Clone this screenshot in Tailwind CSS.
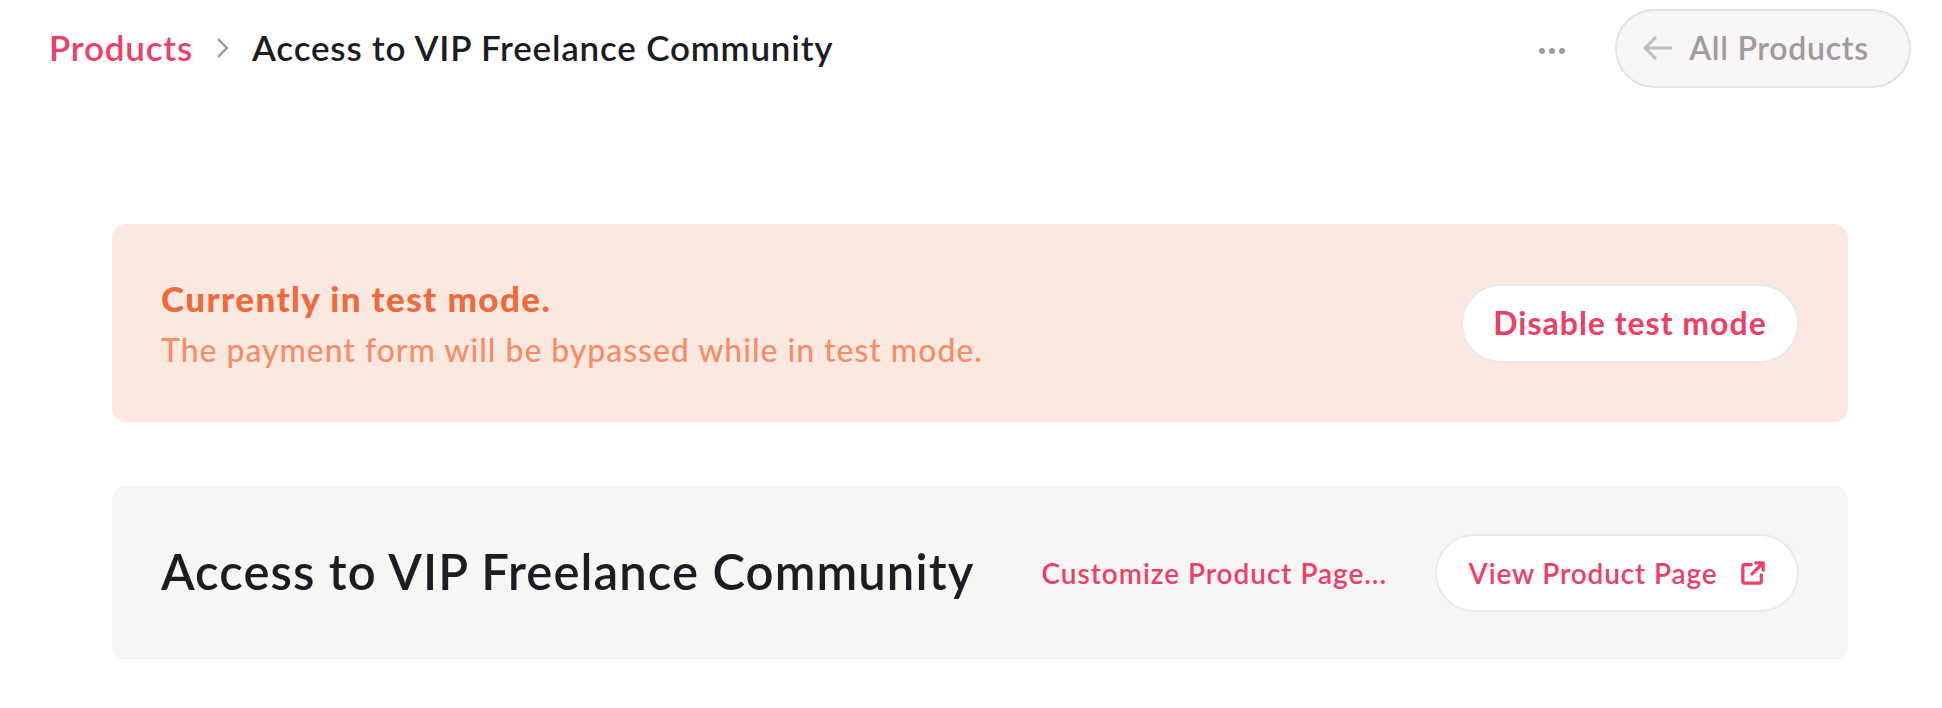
<!DOCTYPE html>
<html lang="en">
<head>
  <meta charset="UTF-8">
  <title>Access to VIP Freelance Community</title>
  <script src="https://cdn.jsdelivr.net/npm/@tailwindcss/browser@4"></script>
</head>
<body class="bg-white font-['Lato',sans-serif]">
  <!-- Top bar -->
  <header class="h-[96px] pl-[49px] pr-[31px] flex items-center justify-between">
    <nav class="flex items-center text-[35px] font-semibold tracking-[0.8px] -mt-[2px]">
      <a class="text-[#ec4067]">Products</a>
      <svg class="ml-[23px] mr-[22px] mt-[2px]" width="14" height="22" viewBox="0 0 14 22" fill="none" stroke="#a0a0aa" stroke-width="2.5"><path d="M2 2l9 9-9 9"/></svg>
      <span class="text-[#1c1c24]">Access to VIP Freelance Community</span>
    </nav>
    <div class="flex items-center">
      <div class="flex gap-[4px] mr-[50px] mt-[6px]">
        <span class="w-[6px] h-[6px] rounded-full bg-[#9d9aa3]"></span>
        <span class="w-[6px] h-[6px] rounded-full bg-[#9d9aa3]"></span>
        <span class="w-[6px] h-[6px] rounded-full bg-[#9d9aa3]"></span>
      </div>
      <button class="w-[296px] h-[79px] pr-[14px] rounded-full border-2 border-[#e6e1e1] bg-[#f7f5f6] flex items-center justify-center gap-[16px] text-[32px] font-semibold tracking-[0.7px] text-[#a09a9a]">
        <svg width="30" height="26" viewBox="0 0 30 26" fill="none" stroke="#c2bdbd" stroke-width="3"><path d="M29 13H2M13 2L2 13l11 11"/></svg>
        All Products
      </button>
    </div>
  </header>

  <main class="pl-[112px] pr-[94px] pt-[128px] flex flex-col gap-[64px]">
    <!-- Test mode notice -->
    <section class="h-[198px] rounded-[14px] bg-[#fae8e1] px-[49px] flex items-center justify-between">
      <div class="pt-[2px]">
        <p class="text-[35px] font-black tracking-[1.4px] text-[#ee6a3b] leading-[46px]">Currently in test mode.</p>
        <p class="text-[32px] font-medium tracking-[0.95px] text-[#f48d68] leading-[46px] mt-[6px]">The payment form will be bypassed while in test mode.</p>
      </div>
      <button class="w-[338px] h-[79px] rounded-full border-2 border-[#e8e8ee] bg-white text-[32px] font-bold tracking-[1px] text-[#ec4067]">Disable test mode</button>
    </section>

    <!-- Product card -->
    <section class="h-[174px] rounded-[14px] bg-[#f7f6f5] px-[49px] flex items-center justify-between">
      <h1 class="text-[49px] font-semibold tracking-[1.1px] text-[#1c1c24] -mt-[2px]">Access to VIP Freelance Community</h1>
      <div class="flex items-center gap-[48px]">
        <a class="text-[28px] font-semibold tracking-[0.95px] text-[#ec4067]">Customize Product Page...</a>
        <button class="w-[364px] h-[78px] rounded-full border-2 border-[#eaeaea] bg-white flex items-center justify-center gap-[24px] text-[28px] font-semibold tracking-[0.85px] text-[#ec4067]">
          View Product Page
          <svg width="24" height="24" viewBox="0 0 26 26" fill="none" stroke="#ec4067" stroke-width="3.5" stroke-linecap="round" stroke-linejoin="round"><path d="M11 4H4a2 2 0 0 0-2 2v16a2 2 0 0 0 2 2h16a2 2 0 0 0 2-2v-7M16 2h8v8M24 2L12 14"/></svg>
        </button>
      </div>
    </section>
  </main>
</body>
</html>
